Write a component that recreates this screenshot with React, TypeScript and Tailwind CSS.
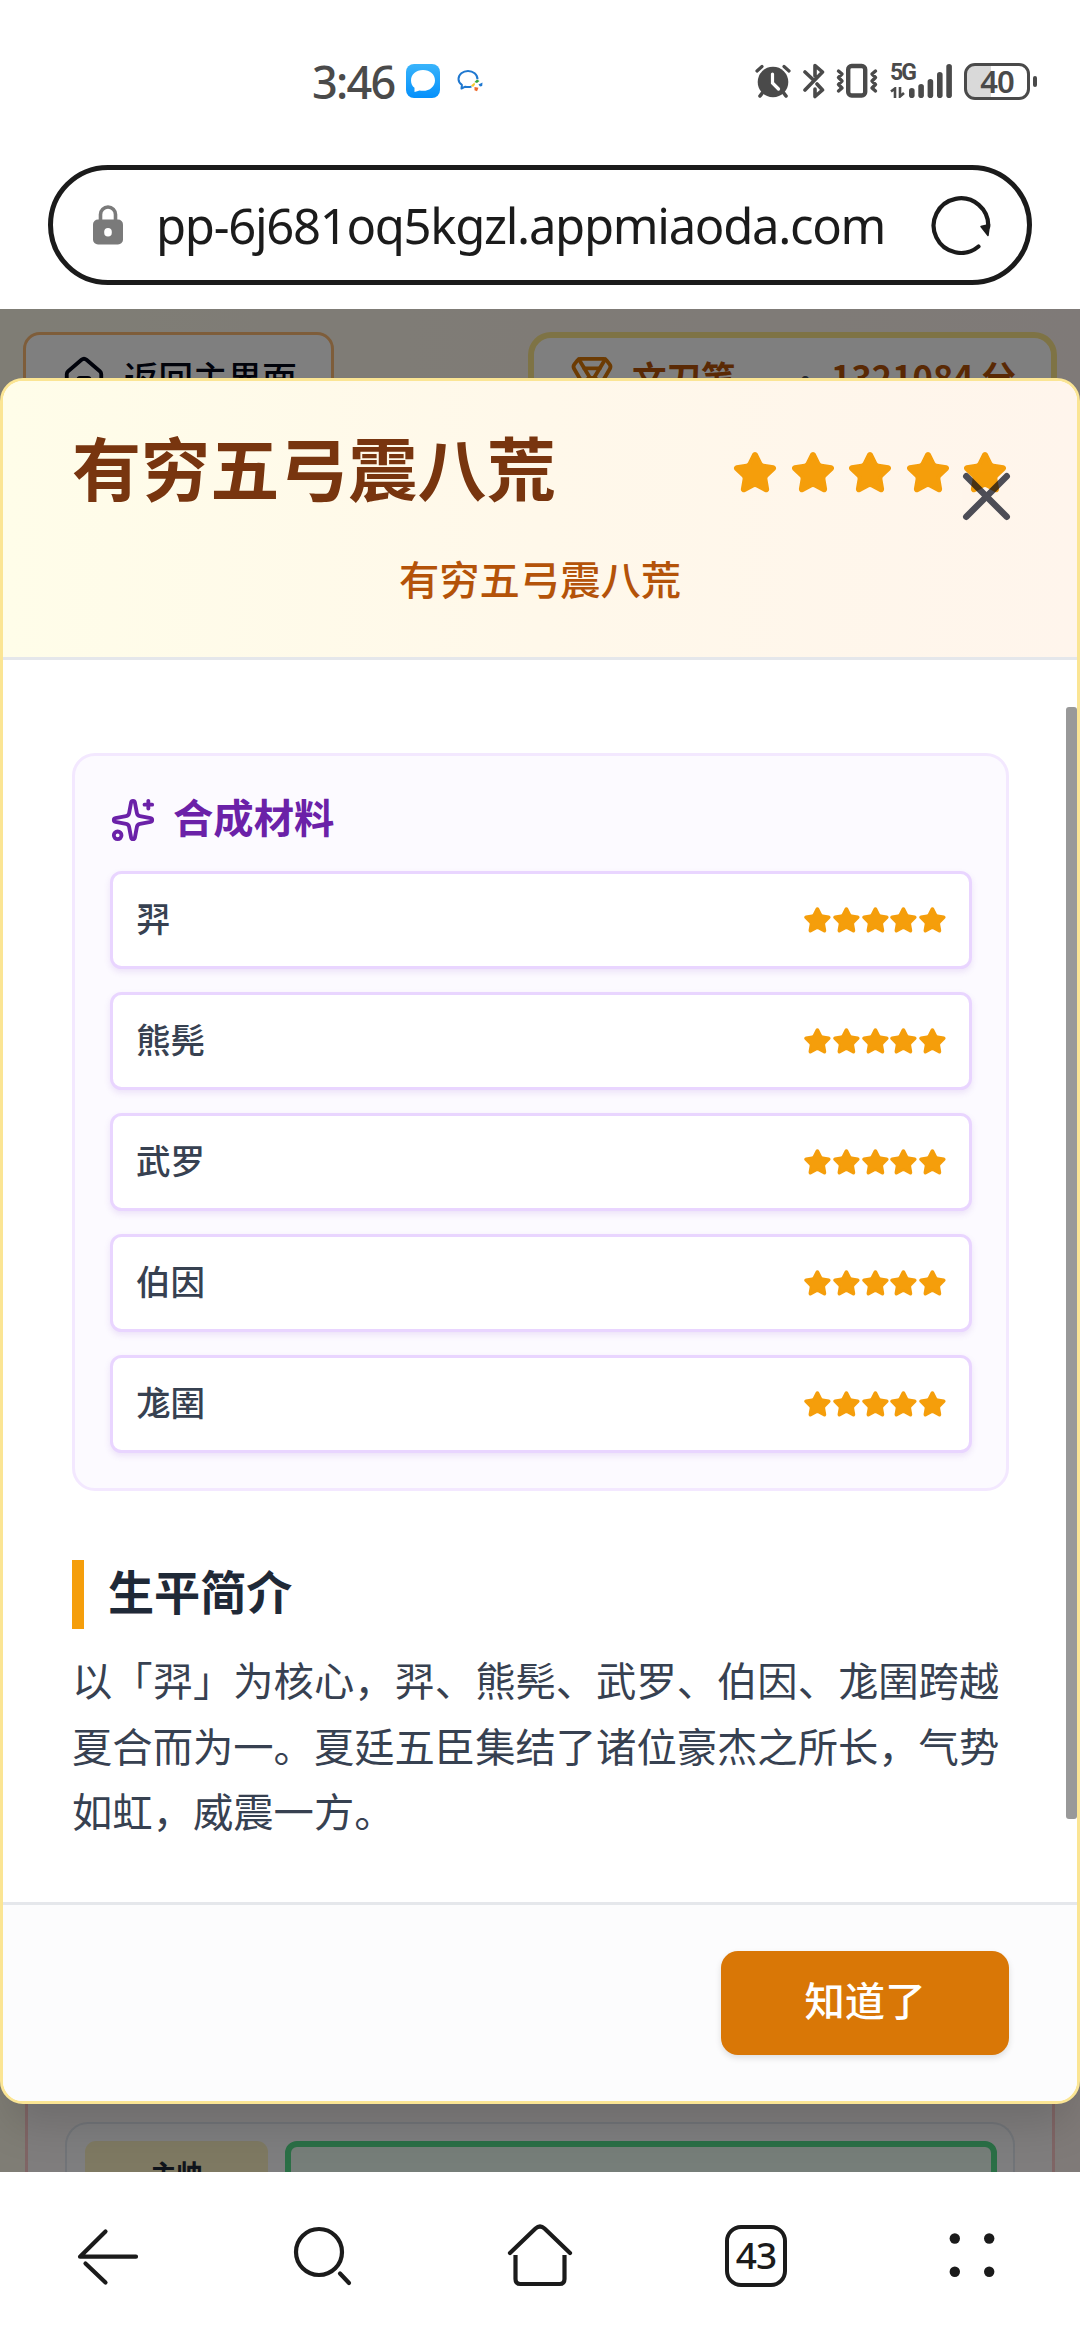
import React from "react";
import { House, Medal, Sparkles, Star, X } from "lucide-react";

const materials = ["羿", "熊髡", "武罗", "伯因", "尨圉"];

function StatusBar() {
  return (
    <header className="flex h-[165px] items-start justify-between pt-[58px] pr-[43px] pl-[312px] text-[#4a4a4a]">
      <div className="flex h-[46px] items-center">
        <span className="w-[94px] font-['Noto_Sans','Noto_Sans_CJK_SC',sans-serif] text-[45px] leading-none font-medium tracking-[-1.700px] whitespace-nowrap">
          3:46
        </span>
        <svg width="34" height="34" viewBox="0 0 34 34">
          <defs>
            <linearGradient id="msg" x1="0" y1="0" x2="0" y2="1">
              <stop offset="0" stopColor="#39b4fb" />
              <stop offset="1" stopColor="#0590fb" />
            </linearGradient>
          </defs>
          <rect width="34" height="34" rx="8" fill="url(#msg)" />
          <path
            d="M17 6C10 6 5 10.600 5 16.400c0 3 1.300 5.600 3.500 7.400V28c1.800-.3 3.600-1 5-1.500 1.100.2 2.300.3 3.500.3 7 0 12-4.600 12-10.400S24 6 17 6Z"
            fill="#fff"
          />
        </svg>
        <svg className="ml-[17px]" width="26" height="24" viewBox="0 0 26 24" fill="none">
          <path
            d="M14.500 17.600c-2 .6-4.300.6-6.200.1L4.500 19.500l.4-3.700C2.700 14.300 1.500 12.200 1.500 10 1.500 5.500 5.900 2 11 2s9.500 3.500 9.500 8.300"
            stroke="#1f78d0"
            strokeWidth="2"
            strokeLinejoin="round"
          />
          <path d="M17.500 13l2.500-2.500 2.500 1.500-2.500 2z" fill="#3aa53a" />
          <path d="M21.500 15.500l4-2-.3 3.500-2.200.5z" fill="#1f78d0" />
          <path d="M17.500 18l4 .8-1.500 3.500-2.500-1z" fill="#ee6a2c" />
          <path d="M14 16.500l3.500-3 .5 2.200-2 2.300z" fill="#f6c92f" />
        </svg>
      </div>

      <div className="flex h-[46px] items-center">
        <svg width="36" height="34" viewBox="0 0 36 34" fill="none" stroke="#4a4a4a" strokeLinecap="round">
          <circle cx="18" cy="18" r="15.300" fill="#4a4a4a" stroke="none" />
          <path d="M2 7l5-4.500M34 7l-5-4.500" strokeWidth="3.200" />
          <path d="M8 28l-3 4M28 28l3 4" strokeWidth="3.600" />
          <path d="M17.500 10v9l6 6" stroke="#fff" strokeWidth="3.200" />
        </svg>
        <svg
          className="ml-[12px]"
          width="22"
          height="36"
          viewBox="0 0 22 36"
          fill="none"
          stroke="#4a4a4a"
          strokeWidth="3.600"
          strokeLinecap="round"
          strokeLinejoin="round"
        >
          <path d="M2 9l8.500 8M12 13V2.500l7.500 6.500L2 27M14 21l5.500 6L12 33.500V26" />
        </svg>
        <svg
          className="ml-[11px]"
          width="42"
          height="36"
          viewBox="0 0 42 36"
          fill="none"
          stroke="#4a4a4a"
          strokeLinecap="round"
          strokeLinejoin="round"
        >
          <rect x="12.200" y="3" width="17" height="29.500" rx="3.500" strokeWidth="4.400" />
          <path
            d="M2.500 8l3.500 3-3.500 3.500 3.500 3.500-3.500 3.500 3.500 3.500-3.500 3M39.500 8l-3.500 3 3.500 3.500-3.500 3.500 3.500 3.500-3.500 3.500 3.500 3"
            strokeWidth="3.400"
          />
        </svg>
        <div className="ml-[12px] flex h-[34px] items-end">
          <div className="flex h-[34px] w-[24px] flex-col justify-between">
            <span className="font-['Roboto',sans-serif] text-[23px] leading-[17px] font-bold tracking-[-2px]">5G</span>
            <svg width="16" height="11" viewBox="0 0 16 11" fill="none" stroke="#4a4a4a" strokeWidth="2.600">
              <path d="M1 4.500L5 1.500V11M10 0v9.500l4-3.500" />
            </svg>
          </div>
          <svg className="-ml-[5px]" width="43" height="34" viewBox="0 0 43 34" fill="#4a4a4a">
            <rect x="0" y="24" width="5.600" height="10" rx="2.800" />
            <rect x="9.300" y="20" width="5.600" height="14" rx="2.800" />
            <rect x="18.600" y="15" width="5.600" height="19" rx="2.800" />
            <rect x="28" y="8" width="5.600" height="26" rx="2.800" />
            <rect x="37.300" y="0" width="5.600" height="34" rx="2.800" />
          </svg>
        </div>
        <div className="ml-[12px] flex h-[37px] w-[66px] items-center justify-center rounded-[11px] border-[3px] border-[#4a4a4a] bg-linear-to-r from-[#d9d9d9] from-40% to-white to-40%">
          <span className="font-['Noto_Sans',sans-serif] text-[31px] leading-none font-semibold tracking-[-1px]">40</span>
        </div>
        <span className="ml-[3px] h-[11px] w-[4px] rounded-full bg-[#4a4a4a]" />
      </div>
    </header>
  );
}

function AddressBar() {
  return (
    <div className="mx-[48px] flex h-[120px] items-center rounded-full border-[5px] border-[#1b1b1b] bg-white pr-[36px] pl-[40px]">
      <svg width="30" height="40" viewBox="0 0 30 40">
        <path d="M7.500 16v-6.500a7.500 7.500 0 0 1 15 0V16" fill="none" stroke="#7a7a7a" strokeWidth="3.600" />
        <rect y="14.500" width="30" height="25" rx="5" fill="#7a7a7a" />
        <rect x="11.200" y="23" width="7.600" height="8.500" rx="3.800" fill="#fff" />
      </svg>
      <span className="ml-[33px] w-[732px] font-['Noto_Sans',sans-serif] text-[49px] leading-[70px] tracking-[-1.300px] whitespace-nowrap text-[#1b1b1b]">
        pp-6j681oq5kgzl.appmiaoda.com
      </span>
      <svg className="ml-auto shrink-0" width="60" height="60" viewBox="0 0 60 60" fill="none">
        <path d="M47.500 51.500A27.300 27.300 0 1 1 57.200 32" stroke="#1b1b1b" strokeWidth="4.200" strokeLinecap="round" />
        <path d="M50 31.500l8.500-2-1.500 11z" fill="#1b1b1b" stroke="#1b1b1b" strokeWidth="1.500" strokeLinejoin="round" />
      </svg>
    </div>
  );
}

function PageBehind() {
  return (
    <div className="flex h-full flex-col justify-between bg-linear-to-r from-[#fffbeb] via-[#fff7ed] to-[#fff5f0]">
      <div className="flex items-start justify-between px-[23px] pt-[23px]">
        <div className="flex h-[92px] w-[311px] items-center gap-[17px] rounded-[17px] border-[3px] border-[#fdba74] bg-white pl-[35px] text-[34.560px] font-medium text-[#020617]">
          <House size={46} className="shrink-0" />
          <span className="pb-[2px] whitespace-nowrap">返回主界面</span>
        </div>
        <div className="flex h-[98px] w-[529px] items-center rounded-[23px] border-[6px] border-[#fde68a] bg-white pb-[6px] pl-[35px] text-[34.560px] font-bold text-[#b45309]">
          <Medal size={46} className="shrink-0 text-[#d97706]" />
          <span className="ml-[17px] w-[156px] pb-[2px] whitespace-nowrap">文刀笔</span>
          <span className="w-[43px] pt-[2px] font-normal text-[#4b5563]">·</span>
          <span className="pb-[2px] whitespace-nowrap">1321084 分</span>
        </div>
      </div>
      <div className="mx-[25px] flex h-[120px] border-x-[3px] border-[#fecaca] bg-[#fffafa] px-[37px] pt-[70px]">
        <div className="flex h-[50px] flex-1 gap-[17px] overflow-hidden rounded-t-[23px] border-x-[2px] border-t-[2px] border-[#e2e8f0] bg-[#fdfdff] pt-[17px] pr-[16px] pl-[18px]">
          <div className="flex h-[90px] w-[183px] items-start justify-center rounded-[11px] bg-[#fdf3c4] pt-[15px] text-[26px] leading-[34px] font-bold text-[#1f2937]">
            主帅
          </div>
          <div className="h-[90px] flex-1 rounded-[12px] border-[6px] border-[#56de8d] bg-[#ecfdf3]" />
        </div>
      </div>
    </div>
  );
}

function MaterialRow({ name }: { name: string }) {
  return (
    <li className="flex h-[98px] items-center justify-between rounded-[11.500px] border-[3px] border-[#e9d5ff] bg-white pr-[22px] pl-[23px] shadow-[0_3px_6px_rgba(120,60,200,0.12)]">
      <span className="pb-[6px] text-[34.560px] leading-[46px] font-medium text-[#374151]">{name}</span>
      <span className="flex">
        {[0, 1, 2, 3, 4].map((i) => (
          <Star key={i} size={28.8} fill="#f59e0b" color="#f59e0b" />
        ))}
      </span>
    </li>
  );
}

function Dialog() {
  return (
    <section className="absolute top-[69px] left-0 flex h-[1726px] w-full flex-col overflow-hidden rounded-[23px] border-[3px] border-[#fbe594] bg-white">
      <div className="flex h-[279px] flex-col border-b-[3px] border-[#e5e7eb] bg-linear-to-r from-[#fffde9] via-[#fff8ea] to-[#fff5ec] px-[69px] pt-[50px]">
        <div className="flex h-[83px] items-center justify-between">
          <h1 className="pb-[12px] text-[69.120px] leading-[83px] font-bold text-[#78350f]">有穷五弓震八荒</h1>
          <div className="flex gap-[11.500px]">
            {[0, 1, 2, 3, 4].map((i) => (
              <Star key={i} size={46} fill="#f59e0b" color="#f59e0b" />
            ))}
          </div>
        </div>
        <p className="mt-[35px] text-center text-[40.320px] leading-[58px] font-medium text-[#b45309]">有穷五弓震八荒</p>
      </div>

      <X size={81} strokeWidth={1.9} color="#020617" className="absolute top-[75px] right-[50.500px] opacity-70" />
      <span className="absolute top-[326px] right-0 h-[1112px] w-[11px] rounded-[3px] bg-[#999]" />

      <div className="h-[1242px] pt-[93px] pr-[68px] pl-[69px]">
        <div className="rounded-[23px] border-[3px] border-[#f3e8ff] bg-[#fcfaff] p-[35px] pr-[34px]">
          <h2 className="flex h-[57px] items-center gap-[17px] text-[40.320px] leading-[57px] font-bold text-[#6b21a8]">
            <Sparkles size={46} />
            <span className="pb-[9px]">合成材料</span>
          </h2>
          <ul className="mt-[23px] flex flex-col gap-[23px]">
            {materials.map((m) => (
              <MaterialRow key={m} name={m} />
            ))}
          </ul>
        </div>
        <h2 className="mt-[69px] h-[69px] border-l-[12px] border-[#f59e0b] pl-[24px] text-[46.080px] leading-[60px] font-bold text-[#1f2937]">
          生平简介
        </h2>
        <p className="mt-[17px] text-[40.320px] leading-[65.520px] text-[#374151]">
          以「羿」为核心，羿、熊髡、武罗、伯因、尨圉跨越夏合而为一。夏廷五臣集结了诸位豪杰之所长，气势如虹，威震一方。
        </p>
      </div>

      <div className="flex flex-1 justify-end border-t-[3px] border-[#e5e7eb] bg-[#fcfcfd] pt-[46px] pr-[68px]">
        <button className="h-[104px] w-[288px] rounded-[17px] bg-[#d97706] pb-[8px] text-[40.320px] font-medium text-white shadow-[0_3px_6px_rgba(0,0,0,0.12)]">
          知道了
        </button>
      </div>
    </section>
  );
}

function BottomNav() {
  return (
    <nav className="grid h-[168px] grid-cols-5 items-center justify-items-center bg-white text-[#1b1b1b]">
      <svg width="64" height="64" viewBox="0 0 64 64" fill="none" stroke="#1b1b1b" strokeWidth="4.200" strokeLinecap="round">
        <path d="M60 32.700H4L29.500 7.500" strokeLinejoin="round" />
        <path d="M9.500 39.500L29.500 58.500" />
      </svg>
      <svg width="64" height="64" viewBox="0 0 64 64" fill="none" stroke="#1b1b1b" strokeWidth="4.200" strokeLinecap="round">
        <circle cx="27" cy="28" r="23" />
        <path d="M48 49.500l9 9.500" />
      </svg>
      <svg
        width="68"
        height="68"
        viewBox="0 0 68 68"
        fill="none"
        stroke="#1b1b1b"
        strokeWidth="4.200"
        strokeLinecap="round"
        strokeLinejoin="round"
      >
        <path d="M4 31L29.500 6.500q4.500-4 9 0L64 31" />
        <path d="M9.500 33v24q0 5 5 5h39q5 0 5-5V33" strokeLinecap="butt" />
      </svg>
      <span className="flex h-[62px] w-[62px] items-center justify-center rounded-[16px] border-[4px] border-[#1b1b1b] pb-[3px] font-['Noto_Sans',sans-serif] text-[37px] leading-none font-medium tracking-[-1px]">
        43
      </span>
      <svg width="46" height="46" viewBox="0 0 46 46" fill="#1b1b1b">
        <circle cx="5.800" cy="5.500" r="5.200" />
        <circle cx="40.200" cy="5.500" r="5.200" />
        <circle cx="5.800" cy="38.700" r="5.200" />
        <circle cx="40.200" cy="38.700" r="5.200" />
      </svg>
    </nav>
  );
}

export default function App() {
  return (
    <div className="h-[2340px] w-[1080px] overflow-hidden bg-white font-['Noto_Sans_CJK_SC',sans-serif]">
      <StatusBar />
      <AddressBar />
      <main className="relative mt-[24px] h-[1863px] overflow-hidden">
        <PageBehind />
        <div className="absolute inset-0 bg-black/50" />
        <div className="absolute inset-x-0 top-[69px] h-[1726px] rounded-[23px] shadow-[0_29px_43px_-9px_rgba(0,0,0,0.14)]" />
        <Dialog />
      </main>
      <BottomNav />
    </div>
  );
}
